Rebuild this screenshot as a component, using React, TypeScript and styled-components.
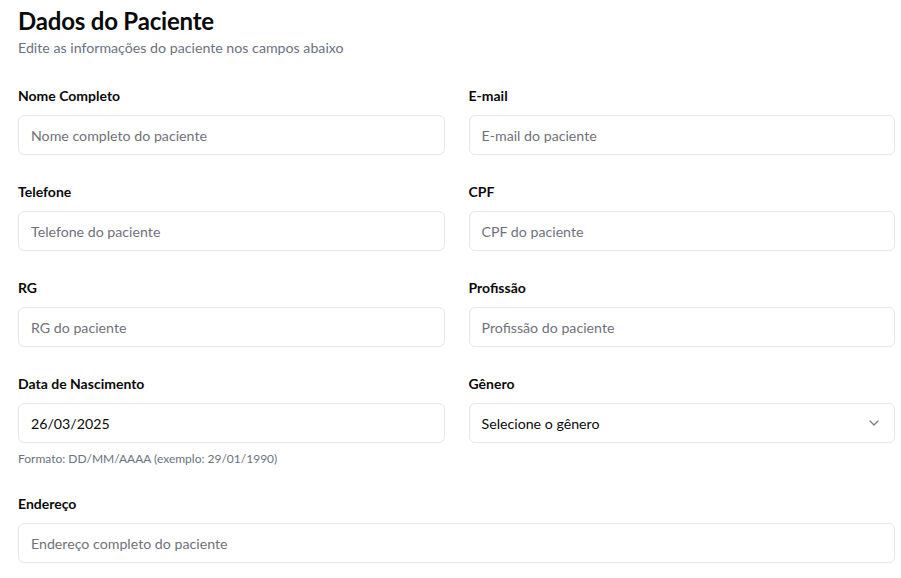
import React from 'react';
import styled, { createGlobalStyle } from 'styled-components';
import { ChevronDown } from 'lucide-react';

const GlobalStyle = createGlobalStyle`
  * { box-sizing: border-box; }
  body {
    margin: 0;
    background: #ffffff;
    font-family: "Lato", "Open Sans", Arial, sans-serif;
    color: #0a0a0a;
  }
`;

const Page = styled.div`
  width: 901px;
  padding: 5px 6px 16px 18px;
`;

const Header = styled.div`
  margin-bottom: 28px;
`;

const Title = styled.h2`
  margin: 0;
  font-size: 24px;
  line-height: 32px;
  font-weight: 700;
  letter-spacing: -0.2px;
`;

const Subtitle = styled.p`
  margin: 0;
  padding-top: 1px;
  font-size: 14.2px;
  line-height: 20px;
  color: #6b7280;
`;

const Grid = styled.div`
  display: grid;
  grid-template-columns: 1fr 1fr;
  gap: 27px 24px;
`;

const Field = styled.div<{ $wide?: boolean }>`
  display: flex;
  flex-direction: column;
  grid-column: ${p => (p.$wide ? '1 / -1' : 'auto')};
`;

const Label = styled.label`
  font-size: 14px;
  line-height: 20px;
  font-weight: 700;
  margin-bottom: 9px;
`;

const Input = styled.input`
  height: 40px;
  width: 100%;
  border: 1px solid #e5e7eb;
  border-radius: 6px;
  padding: 0 12px;
  font-family: inherit;
  font-size: 14.2px;
  color: #0a0a0a;
  background: #fff;
  outline: none;
  &::placeholder { color: #71717a; }
`;

const SelectBox = styled.button`
  height: 40px;
  width: 100%;
  border: 1px solid #e5e7eb;
  border-radius: 6px;
  padding: 0 12px;
  display: flex;
  align-items: center;
  justify-content: space-between;
  font-family: inherit;
  font-size: 14.2px;
  color: #0a0a0a;
  background: #fff;
  cursor: pointer;
  svg { opacity: 0.5; }
`;

const Hint = styled.span`
  margin-top: 8px;
  font-size: 12px;
  line-height: 16px;
  color: #6b7280;
`;

const fields = [
  { label: 'Nome Completo', placeholder: 'Nome completo do paciente' },
  { label: 'E-mail', placeholder: 'E-mail do paciente' },
  { label: 'Telefone', placeholder: 'Telefone do paciente' },
  { label: 'CPF', placeholder: 'CPF do paciente' },
  { label: 'RG', placeholder: 'RG do paciente' },
  { label: 'Profissão', placeholder: 'Profissão do paciente' },
];

export default function App() {
  return (
    <Page>
      <GlobalStyle />
      <Header>
        <Title>Dados do Paciente</Title>
        <Subtitle>Edite as informações do paciente nos campos abaixo</Subtitle>
      </Header>
      <Grid>
        {fields.map(f => (
          <Field key={f.label}>
            <Label>{f.label}</Label>
            <Input placeholder={f.placeholder} />
          </Field>
        ))}
        <Field>
          <Label>Data de Nascimento</Label>
          <Input defaultValue="26/03/2025" />
          <Hint>Formato: DD/MM/AAAA (exemplo: 29/01/1990)</Hint>
        </Field>
        <Field>
          <Label>Gênero</Label>
          <SelectBox type="button">
            <span>Selecione o gênero</span>
            <ChevronDown size={16} />
          </SelectBox>
        </Field>
        <Field $wide>
          <Label>Endereço</Label>
          <Input placeholder="Endereço completo do paciente" />
        </Field>
      </Grid>
    </Page>
  );
}
